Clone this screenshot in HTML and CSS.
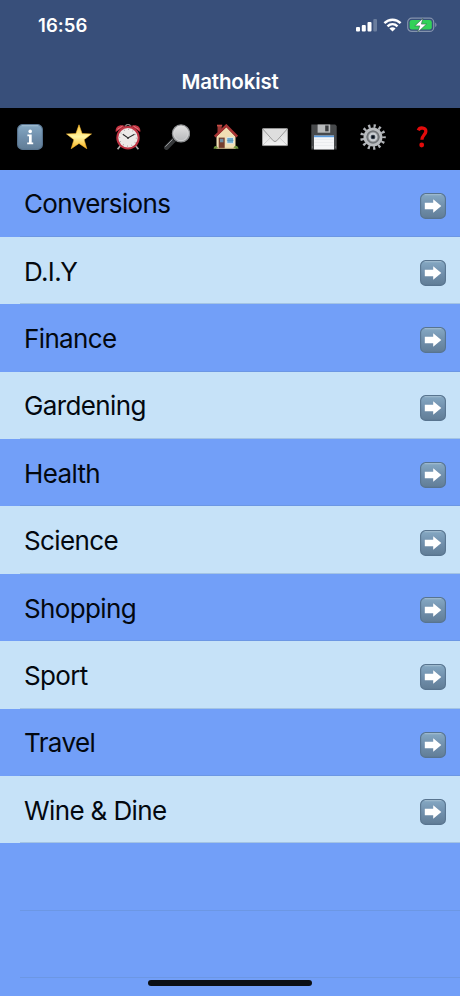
FILE: index.html
```
<!DOCTYPE html>
<html lang="en">
<head>
    <meta charset="UTF-8">
    <meta name="viewport" content="width=device-width, initial-scale=1.0">
    <title>Mathokist</title>
    <link rel="stylesheet" href="styles.css">
</head>
<body>
    <!-- Shared shapes -->
    <svg class="defs" width="0" height="0" aria-hidden="true">
        <defs>
            <linearGradient id="tile" x1="0" y1="0" x2="0" y2="1">
                <stop offset="0" stop-color="#86a9c4"/>
                <stop offset="0.5" stop-color="#7190ad"/>
                <stop offset="1" stop-color="#617d96"/>
            </linearGradient>
            <linearGradient id="gold" x1="0" y1="0" x2="0" y2="1">
                <stop offset="0" stop-color="#ffc83a"/>
                <stop offset="0.5" stop-color="#fff6a4"/>
                <stop offset="1" stop-color="#f9b21c"/>
            </linearGradient>
            <linearGradient id="silver" x1="0" y1="0" x2="0" y2="1">
                <stop offset="0" stop-color="#e2e2e2"/>
                <stop offset="1" stop-color="#b5b7b9"/>
            </linearGradient>
            <linearGradient id="paper" x1="0" y1="0" x2="0" y2="1">
                <stop offset="0" stop-color="#d6d6d6"/>
                <stop offset="1" stop-color="#f4f4f4"/>
            </linearGradient>
            <symbol id="arrow" viewBox="0 0 26 26">
                <rect x="0.6" y="0.6" width="24.8" height="24.8" rx="5" fill="url(#tile)" stroke="#58748f" stroke-width="1.1"/>
                <path d="M5 1.7h16" stroke="#a9c3d6" stroke-width="0.9" stroke-linecap="round"/>
                <path d="M4.8 9.8h8.4V6.3L21.3 13l-8.1 6.7v-3.5H4.8z" fill="#fff"/>
            </symbol>
        </defs>
    </svg>

    <header class="header">
        <div class="status-bar">
            <span class="time">16:56</span>
            <div class="status-icons">
                <svg width="22" height="14" viewBox="0 0 22 14">
                    <rect x="0" y="9" width="4" height="4.5" rx="1" fill="#fff"/>
                    <rect x="5.8" y="7" width="4" height="6.5" rx="1" fill="#fff"/>
                    <rect x="11.5" y="4" width="4" height="9.5" rx="1" fill="#fff"/>
                    <rect x="17.3" y="1" width="3.7" height="12.5" rx="1" fill="#6a7d9d"/>
                </svg>
                <svg width="19" height="14" viewBox="0 0 19 14">
                    <path d="M1.4 5.2C6 .6 13 .6 17.6 5.2M4.5 8.3c2.9-2.8 7.1-2.8 10 0" fill="none" stroke="#fff" stroke-width="2.4"/>
                    <path d="M6.4 10.4c1.8-1.6 4.4-1.6 6.2 0L9.5 13.5z" fill="#fff"/>
                </svg>
                <svg width="31" height="16" viewBox="0 0 31 16">
                    <rect x="0.7" y="1.2" width="26" height="13.2" rx="4" fill="none" stroke="#8493ad" stroke-width="1.2"/>
                    <rect x="2.6" y="3" width="22.2" height="9.6" rx="2.3" fill="#32d158"/>
                    <path d="M28.2 5.5c1.8.8 1.8 3.8 0 4.6z" fill="#8493ad"/>
                    <path d="M15.9 1.2 7.8 8.9h5l-2.1 6.3 8.9-8.1h-5.2z" fill="#fff" stroke="#37604f" stroke-width="0.6"/>
                </svg>
            </div>
        </div>
        <h1>Mathokist</h1>
    </header>

    <nav class="toolbar">
        <!-- Info -->
        <svg class="icon" viewBox="0 0 26 26">
            <rect x="0.6" y="0.6" width="24.8" height="24.8" rx="5" fill="url(#tile)" stroke="#58748f" stroke-width="1.1"/>
            <path d="M5 1.7h16" stroke="#a9c3d6" stroke-width="0.9" stroke-linecap="round"/>
            <circle cx="13.2" cy="7.4" r="1.8" fill="#fff"/>
            <path d="M10.4 10.4h4.3v8h1.5v1.8h-6v-1.8h1.8v-6.2h-1.6z" fill="#fff"/>
        </svg>
        <!-- Favourites -->
        <svg class="icon" viewBox="0 0 26 26">
            <path d="M13 .8 16.1 9.6l9.4.3-7.4 5.8 2.7 9L13 19.4l-7.8 5.3 2.7-9L.5 9.9l9.4-.3z" fill="url(#gold)" stroke="#f5b52e" stroke-width="0.6" stroke-linejoin="round"/>
        </svg>
        <!-- Alarm clock -->
        <svg class="icon" viewBox="0 0 26 26">
            <path d="m6 21-3.4 4.3M20 21l3.4 4.3" stroke="#a9a9a9" stroke-width="1.7"/>
            <path d="M10 2.6C12-.4 14-.4 16 2.6" fill="none" stroke="#8f8586" stroke-width="1.2"/>
            <path d="M.8 8C-.2 2.8 4-.2 10.3 1.8zM25.2 8c1-5.2-3.2-8.2-9.5-6.2z" fill="#c63442"/>
            <path d="M2.3 5.4 7.6 2M23.7 5.4 18.4 2" stroke="#e88b91" stroke-width="0.8"/>
            <circle cx="13" cy="13.8" r="10.7" fill="#eceae8" stroke="#bf3544" stroke-width="2"/>
            <circle cx="13" cy="13.8" r="8.4" fill="none" stroke="#a0a0a0" stroke-width="1.2" stroke-dasharray=".8 3.6"/>
            <path d="m7.8 10.3 5.2 3.6 6.5-3.6" fill="none" stroke="#292929" stroke-width="1.1"/>
            <circle cx="13" cy="13.9" r="1" fill="#393939"/>
        </svg>
        <!-- Search -->
        <svg class="icon" viewBox="0 0 26 26">
            <path d="m10.5 15.3-8 8.2" stroke="#36383a" stroke-width="4.8" stroke-linecap="round"/>
            <path d="m9 15-7.4 7.5" stroke="#96999b" stroke-width="1" stroke-linecap="round"/>
            <path d="m11.6 14-2.2 2.3" stroke="#1e1f20" stroke-width="3.6"/>
            <circle cx="17" cy="9.4" r="8.5" fill="url(#silver)" stroke="#919395" stroke-width="1.4"/>
            <circle cx="17" cy="9.4" r="7.3" fill="none" stroke="#dedede" stroke-width="0.6"/>
        </svg>
        <!-- Home -->
        <svg class="icon" viewBox="0 0 26 26">
            <path d="M4.5 1.7h4.2v6.5H4.5z" fill="#993936"/>
            <path d="M3.5 12.5 13.5 3l9 9.5v12.2h-19z" fill="#f1dfb5"/>
            <path d="m1.8 12.6 11.5-11 10.9 11" fill="none" stroke="#a83434" stroke-width="2.5"/>
            <path d="M4 .7h5.2v1.7H4z" fill="#c94c45"/>
            <path d="M5.7 13.6h6v11h-6z" fill="#753e2e"/>
            <path d="M7 14.8h3.4v3.5H7z" fill="#708da2"/>
            <path d="M13.9 13.5h6.6v5.8h-6.6z" fill="#69a9cc" stroke="#e9ecec" stroke-width="0.8"/>
            <path d="M13.9 16.4h6.6" stroke="#4b87aa" stroke-width="0.6"/>
            <path d="M.6 24.7c0-3.2 3.5-4.2 4.7 0zM20.3 24.7c.6-4 4.8-3.8 5.2 0z" fill="#6f943c"/>
            <path d="M3.5 24.3h19" stroke="#bba97e" stroke-width="0.8"/>
        </svg>
        <!-- Mail -->
        <svg class="icon" viewBox="0 0 26 26">
            <rect x="0.4" y="4.6" width="25.2" height="17" rx="0.7" fill="url(#paper)" stroke="#b5b5b5" stroke-width="0.6"/>
            <path d="m1 21 8.8-8.6M25 21l-8.8-8.6" stroke="#c6c6c6" stroke-width="0.8"/>
            <path d="m.8 5 10.4 11.7q1.8 1.8 3.6 0L25.2 5" fill="#dedede" stroke="#999" stroke-width="1"/>
        </svg>
        <!-- Save -->
        <svg class="icon" viewBox="0 0 26 26">
            <path d="M.3.5h23.9l1.5 1.6v23.4H.3z" fill="#484a4c"/>
            <path d="M6.6.5h12.6v8.2H6.6z" fill="#b8babb"/>
            <path d="M14.2 1.5h3.4v5.8h-3.4z" fill="#3a3c3e"/>
            <path d="M3 11.6h20v13.9H3z" fill="#f5f6f8"/>
            <path d="M3 11.6h20v1.6H3z" fill="#5a9ce0"/>
            <path d="M3.5 15.5h19M3.5 18.5h19M3.5 21.5h19" stroke="#e1e4e8" stroke-width="0.5"/>
            <path d="M.9 23h1M24.1 23h1" stroke="#888" stroke-width="1"/>
        </svg>
        <!-- Settings -->
        <svg class="icon" viewBox="0 0 26 26">
            <circle cx="13" cy="13" r="11" fill="none" stroke="#b1b4b8" stroke-width="3.6" stroke-dasharray="2.2 3.116" stroke-dashoffset="1.1"/>
            <circle cx="13" cy="13" r="8.1" fill="#85888b" stroke="#b8bbbe" stroke-width="3"/>
            <circle cx="13" cy="13" r="6" fill="none" stroke="#6a6e72" stroke-width="1"/>
            <circle cx="13" cy="13" r="3.4" fill="#38424f" stroke="#c9cdd1" stroke-width="2.1"/>
            <circle cx="13" cy="13" r="1.2" fill="#0a1018"/>
        </svg>
        <!-- Help -->
        <svg class="icon" viewBox="0 0 26 26">
            <path d="M9.3 6.4c1.4-3.7 8.2-3 7.5 1.4-.5 3.1-4 3.9-3.9 8" fill="none" stroke="#e30b0b" stroke-width="3.3"/>
            <circle cx="12.7" cy="21" r="2.4" fill="#e30b0b"/>
        </svg>
    </nav>

    <main class="list">
        <a class="row"><span>Conversions</span><svg class="icon"><use href="#arrow"/></svg></a>
        <a class="row"><span>D.I.Y</span><svg class="icon"><use href="#arrow"/></svg></a>
        <a class="row"><span>Finance</span><svg class="icon"><use href="#arrow"/></svg></a>
        <a class="row"><span>Gardening</span><svg class="icon"><use href="#arrow"/></svg></a>
        <a class="row"><span>Health</span><svg class="icon"><use href="#arrow"/></svg></a>
        <a class="row"><span>Science</span><svg class="icon"><use href="#arrow"/></svg></a>
        <a class="row"><span>Shopping</span><svg class="icon"><use href="#arrow"/></svg></a>
        <a class="row"><span>Sport</span><svg class="icon"><use href="#arrow"/></svg></a>
        <a class="row"><span>Travel</span><svg class="icon"><use href="#arrow"/></svg></a>
        <a class="row"><span>Wine &amp; Dine</span><svg class="icon"><use href="#arrow"/></svg></a>
        <div class="row empty"></div>
        <div class="row empty"></div>
    </main>

    <div class="home-indicator"></div>
</body>
</html>
```
FILE: styles.css
```
* {
    box-sizing: border-box;
}
body {
    margin: 0;
    height: 996px;
    overflow: hidden;
    font-family: Inter, 'Liberation Sans', sans-serif;
    background-color: #729ff8;
    color: #03080f;
}
svg {
    display: block;
    flex: none;
}
.defs {
    position: absolute;
}
.header {
    height: 108px;
    background-color: #384f7a;
    color: #ffffff;
}
.status-bar {
    display: flex;
    justify-content: space-between;
    height: 50px;
    padding: 0 22px 0 38px;
    align-items: center;
}
.time {
    font-size: 18.5px;
    font-weight: 600;
    letter-spacing: 0.1px;
}
.status-icons {
    display: flex;
    align-items: center;
    gap: 5px;
}
h1 {
    margin: 0;
    padding-top: 18px;
    font-size: 20.5px;
    font-weight: 600;
    line-height: 28px;
    letter-spacing: -0.15px;
    text-align: center;
}
.toolbar {
    display: flex;
    gap: 23px;
    height: 61.5px;
    padding: 15.5px 17px 0;
    background-color: #000000;
}
.icon {
    width: 26px;
    height: 26px;
}
.row {
    display: flex;
    align-items: center;
    justify-content: space-between;
    height: 67.4px;
    padding: 1px 14px 0 24px;
    font-size: 26px;
    letter-spacing: -0.63px;
    /* separator is inset from the left edge */
    background: linear-gradient(#6c97e4, #6c97e4) 20px 100% / 100% 1px no-repeat #729ff8;
}
.row:nth-child(even) {
    background: linear-gradient(#a4c4e4, #a4c4e4) 20px 100% / 100% 1px no-repeat #c6e2f8;
}
.row .icon {
    margin-top: 4px;
}
.row.empty {
    background: linear-gradient(#6c97e4, #6c97e4) 20px 100% / 100% 1px no-repeat #729ff8;
}
.home-indicator {
    position: absolute;
    left: 148px;
    bottom: 10px;
    width: 164px;
    height: 6px;
    border-radius: 3px;
    background-color: #0b0f14;
}
```
